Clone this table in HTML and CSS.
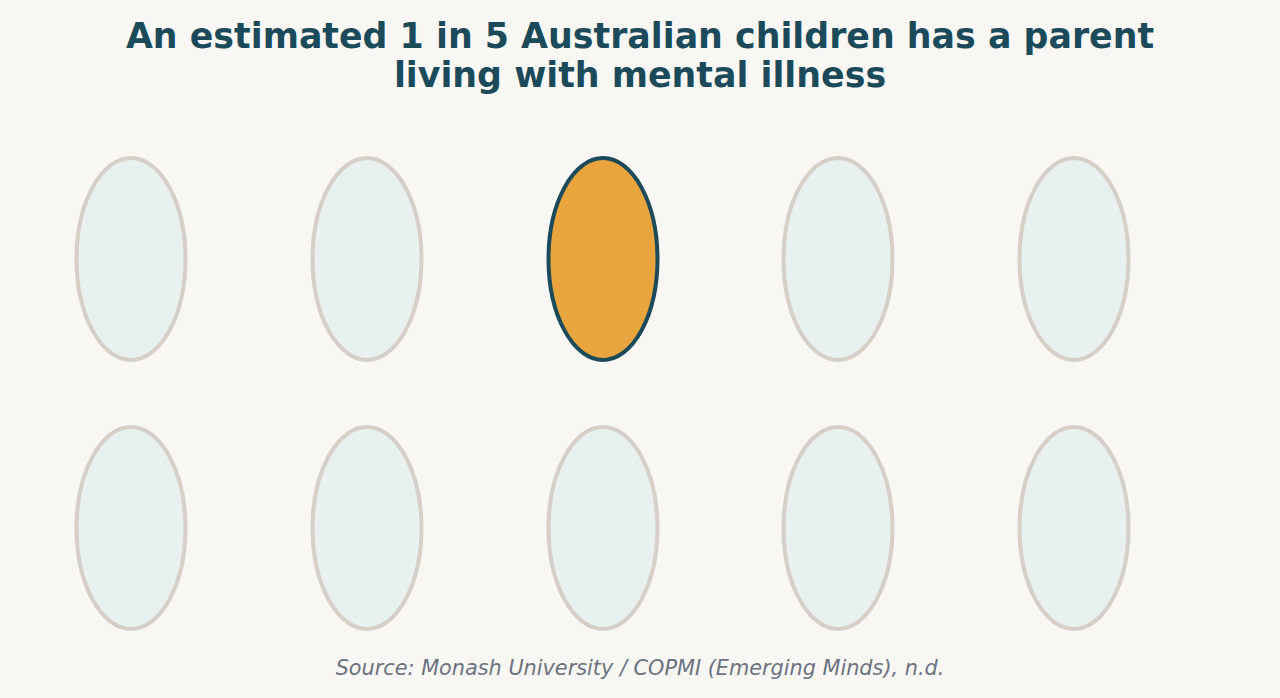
FILE: index.html
```html
<!DOCTYPE html>
<html lang="en">
<head>
<meta charset="utf-8">
<title>1 in 5</title>
<link rel="stylesheet" href="styles.css">
</head>
<body>
<main class="page">
  <h1 class="title">An estimated 1 in 5 Australian children has a parent<br>living with mental illness</h1>
  <div class="grid">
    <div class="cell"><svg class="oval" viewBox="0 0 114 210"><ellipse cx="57" cy="105" rx="54.5" ry="101"/></svg></div>
    <div class="cell"><svg class="oval" viewBox="0 0 114 210"><ellipse cx="57" cy="105" rx="54.5" ry="101"/></svg></div>
    <div class="cell"><svg class="oval active" viewBox="0 0 114 210"><ellipse cx="57" cy="105" rx="54.5" ry="101"/></svg></div>
    <div class="cell"><svg class="oval" viewBox="0 0 114 210"><ellipse cx="57" cy="105" rx="54.5" ry="101"/></svg></div>
    <div class="cell"><svg class="oval" viewBox="0 0 114 210"><ellipse cx="57" cy="105" rx="54.5" ry="101"/></svg></div>
    <div class="cell"><svg class="oval" viewBox="0 0 114 210"><ellipse cx="57" cy="105" rx="54.5" ry="101"/></svg></div>
    <div class="cell"><svg class="oval" viewBox="0 0 114 210"><ellipse cx="57" cy="105" rx="54.5" ry="101"/></svg></div>
    <div class="cell"><svg class="oval" viewBox="0 0 114 210"><ellipse cx="57" cy="105" rx="54.5" ry="101"/></svg></div>
    <div class="cell"><svg class="oval" viewBox="0 0 114 210"><ellipse cx="57" cy="105" rx="54.5" ry="101"/></svg></div>
    <div class="cell"><svg class="oval" viewBox="0 0 114 210"><ellipse cx="57" cy="105" rx="54.5" ry="101"/></svg></div>
  </div>
  <p class="source">Source: Monash University / COPMI (Emerging Minds), n.d.</p>
</main>
</body>
</html>
```

FILE: styles.css
```css
html, body {
  margin: 0;
  padding: 0;
  background: #f9f7f4;
}
body {
  width: 1280px;
  height: 698px;
  overflow: hidden;
  font-family: "DejaVu Sans", sans-serif;
}
.page {
  display: flex;
  flex-direction: column;
  align-items: stretch;
}
.title {
  margin: 17px 0 0;
  font-size: 34.8px;
  line-height: 39px;
  font-weight: bold;
  color: #1b4b5a;
  text-align: center;
}
.grid {
  margin-top: 59px;
  padding-left: 13.3px;
  display: grid;
  grid-template-columns: repeat(5, 235.7px);
  row-gap: 59px;
}
.cell {
  display: flex;
  justify-content: center;
}
.oval {
  width: 114px;
  height: 210px;
  display: block;
}
.oval ellipse {
  fill: #e9f1f0;
  stroke: #d5cfc7;
  stroke-width: 4;
}
.oval.active ellipse {
  fill: #e8a43d;
  stroke: #1b4b5a;
}
.source {
  margin: 23px 0 0;
  font-size: 20.8px;
  line-height: 24px;
  font-style: italic;
  color: #6b7280;
  text-align: center;
}
```
